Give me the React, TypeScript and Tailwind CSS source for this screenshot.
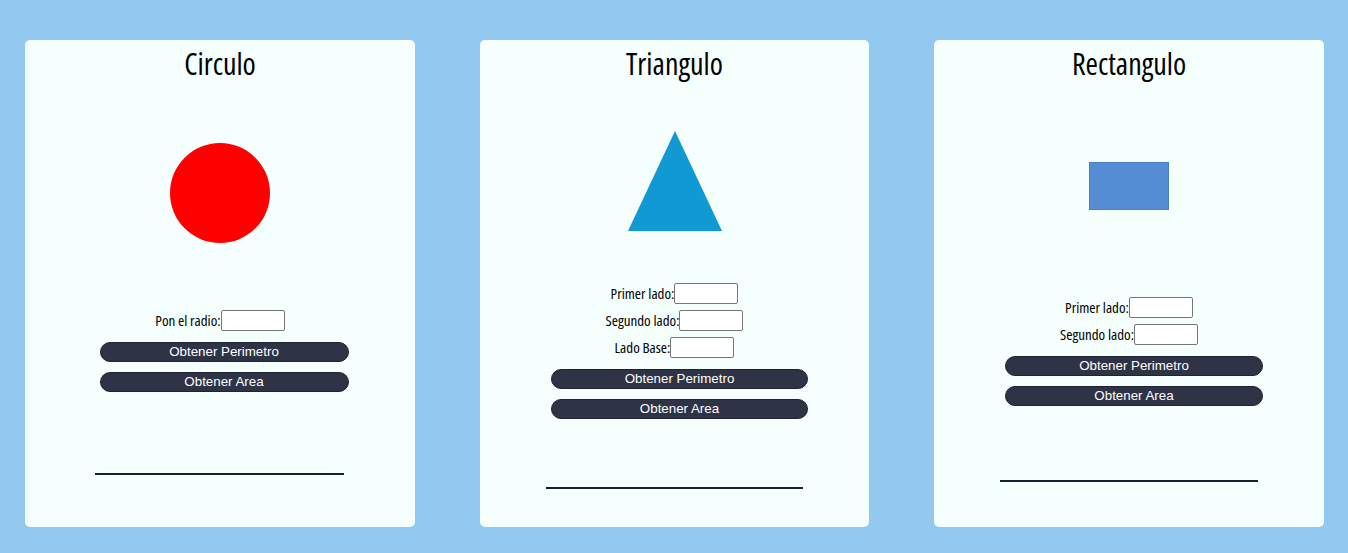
import React from "react";

const cond = "font-['Open_Sans',sans-serif] [font-stretch:75%]";

function Row({ label }: { label: string }) {
  return (
    <div className={`flex items-center justify-center h-[21px] text-[15px] text-black ${cond}`}>
      <span>{label}</span>
      <input className="w-[64px] h-[21px] bg-white border border-[#767676] rounded-[2px] outline-none" />
    </div>
  );
}

function Btn({ label, w }: { label: string; w: string }) {
  return (
    <button
      className={`${w} h-[20px] rounded-full bg-[#2e3345] border border-[#1f2333] text-white text-[13.3333px] leading-[18px] font-['Liberation_Sans',Arial,sans-serif]`}
    >
      {label}
    </button>
  );
}

function Title({ t }: { t: string }) {
  return (
    <h2 className={`mt-[2px] h-[43px] leading-[44px] text-[30px] text-black ${cond}`}>{t}</h2>
  );
}

export default function App() {
  return (
    <div className="w-[1348px] h-[553px] bg-[#93c9ee] flex items-start pl-[25px] pt-[40px] gap-[65px] overflow-hidden">
      {/* Circulo */}
      <div className="w-[390px] h-[487px] bg-[#f5fffd] rounded-[5px] flex flex-col items-center">
        <Title t="Circulo" />
        <div className="mt-[58px] w-[100px] h-[100px] rounded-full bg-[#ff0000]" />
        <div className="mt-[67px]">
          <Row label="Pon el radio:" />
        </div>
        <div className="mt-[11px] flex flex-col gap-[10px] translate-x-[4px]">
          <Btn label="Obtener Perimetro" w="w-[249px]" />
          <Btn label="Obtener Area" w="w-[249px]" />
        </div>
        <div className="mt-[81px] w-[249px] h-[2px] bg-[#10212f] -translate-x-[1px]" />
      </div>

      {/* Triangulo */}
      <div className="w-[389px] h-[487px] bg-[#f5fffd] rounded-[5px] flex flex-col items-center">
        <Title t="Triangulo" />
        <svg className="mt-[46px]" width="94" height="100" viewBox="0 0 94 100">
          <polygon points="47,0 94,100 0,100" fill="#1199d4" />
        </svg>
        <div className="mt-[52px] flex flex-col gap-[6px]">
          <Row label="Primer lado:" />
          <Row label="Segundo lado:" />
          <Row label="Lado Base:" />
        </div>
        <div className="mt-[11px] flex flex-col gap-[10px] translate-x-[5px]">
          <Btn label="Obtener Perimetro" w="w-[257px]" />
          <Btn label="Obtener Area" w="w-[257px]" />
        </div>
        <div className="mt-[68px] w-[257px] h-[2px] bg-[#10212f]" />
      </div>

      {/* Rectangulo */}
      <div className="w-[390px] h-[487px] bg-[#f5fffd] rounded-[5px] flex flex-col items-center">
        <Title t="Rectangulo" />
        <div className="mt-[77px] w-[80px] h-[48px] bg-[#548dd4] border border-[#4a7fc0]" />
        <div className="mt-[87px] flex flex-col gap-[6px]">
          <Row label="Primer lado:" />
          <Row label="Segundo lado:" />
        </div>
        <div className="mt-[11px] flex flex-col gap-[10px] translate-x-[5px]">
          <Btn label="Obtener Perimetro" w="w-[258px]" />
          <Btn label="Obtener Area" w="w-[258px]" />
        </div>
        <div className="mt-[74px] w-[258px] h-[2px] bg-[#10212f]" />
      </div>
    </div>
  );
}
